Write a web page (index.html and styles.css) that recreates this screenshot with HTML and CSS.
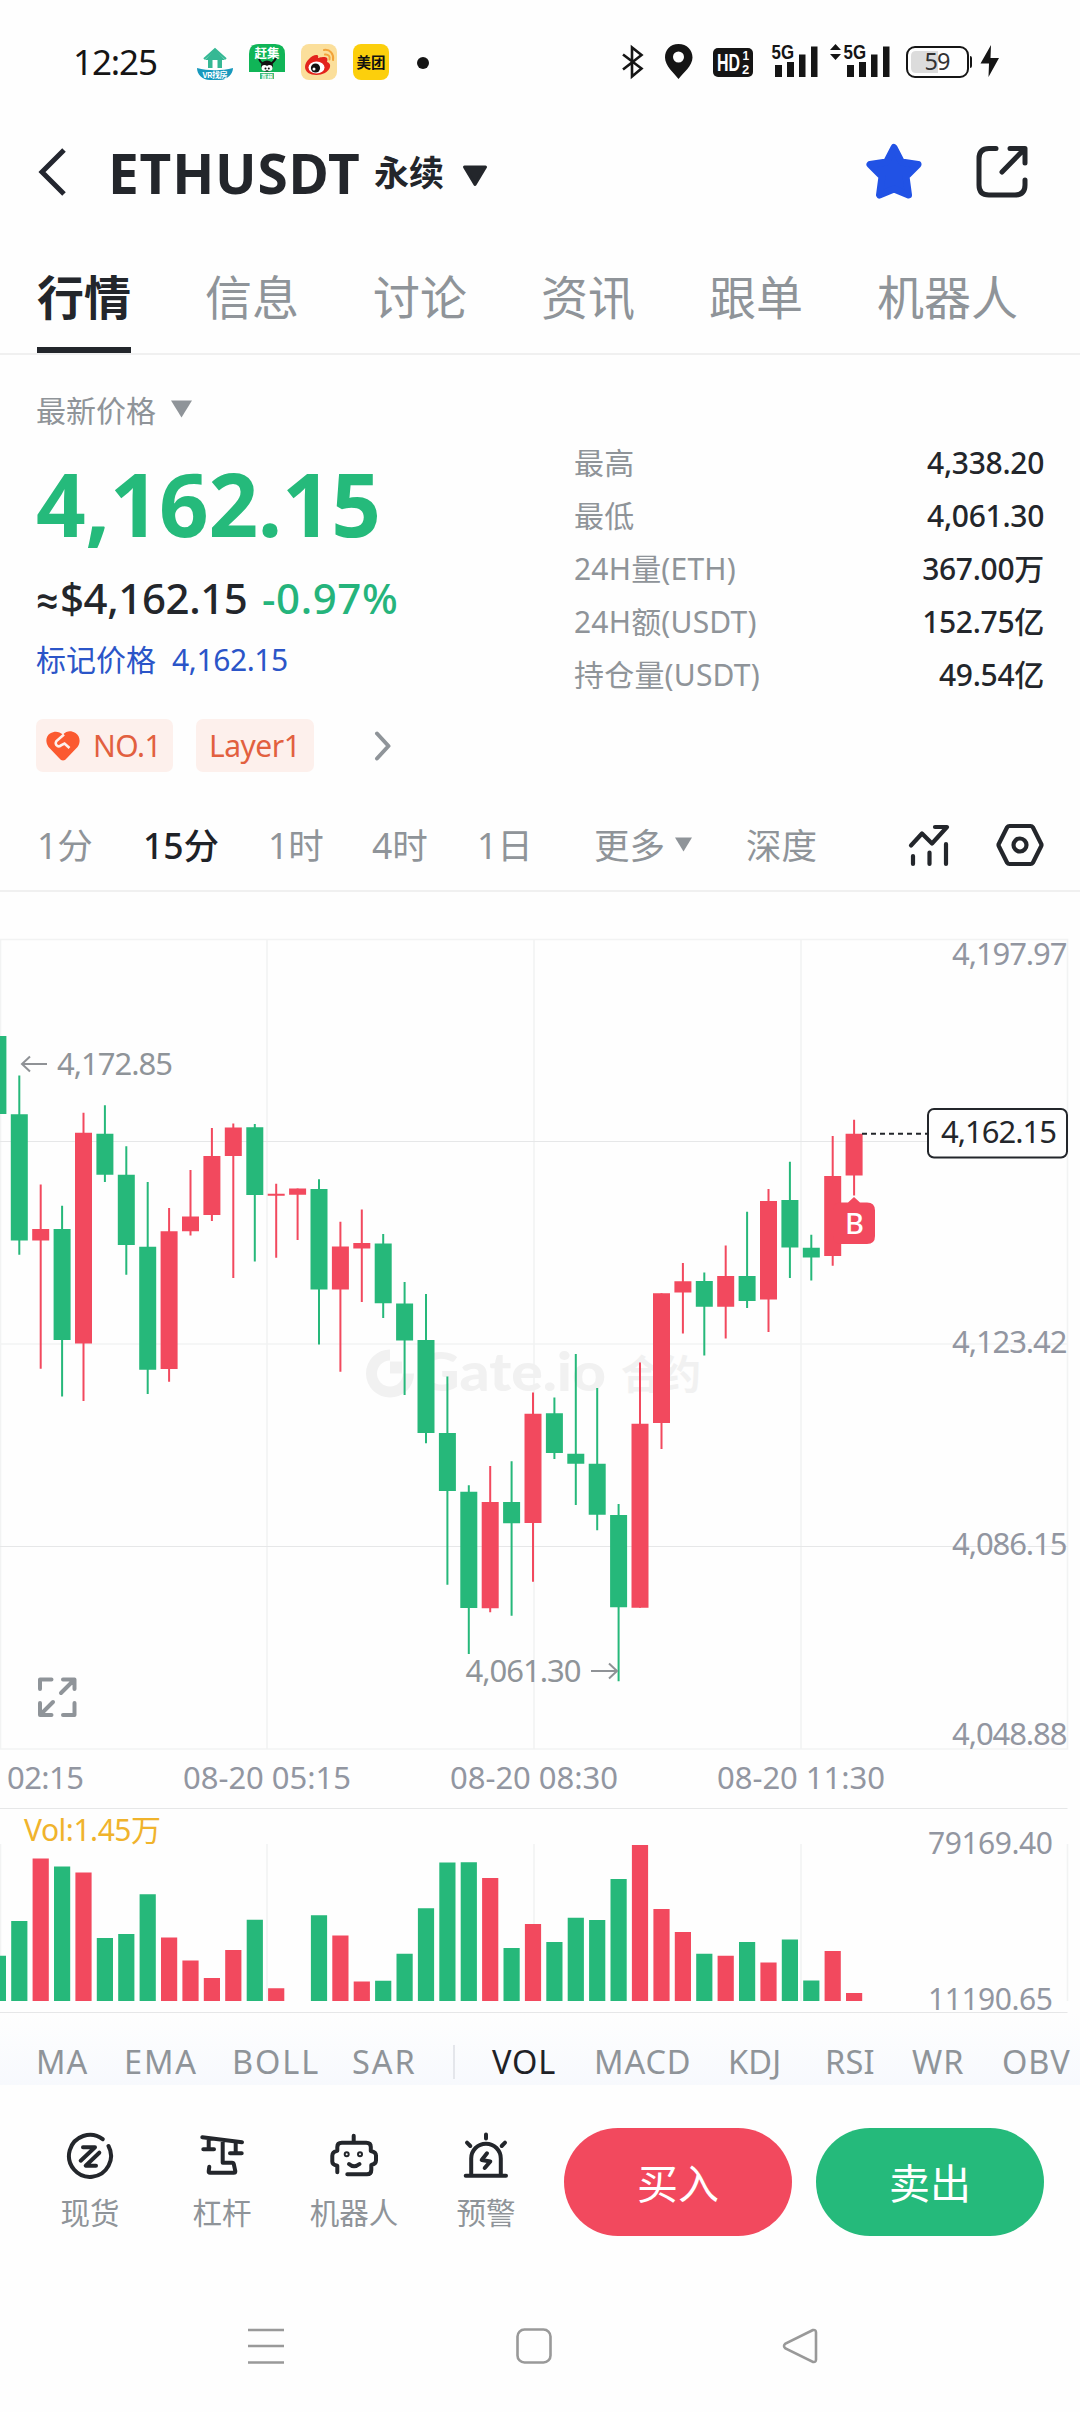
FILE: index.html
```html
<!DOCTYPE html>
<html lang="zh-CN">
<head>
<meta charset="utf-8">
<title>ETHUSDT 永续</title>
<link rel="stylesheet" href="styles.css">
</head>
<body>
<div class="screen">
  <div class="status">
    <span class="clock">12:25</span>
    <div class="apps">
      <svg class="app" viewBox="0 0 36 36"><path d="M8 16 18 5l10 11h-3v8H11v-8z" fill="#35b894"/><path d="M15.500 24v-8h5v8z" fill="#fff"/><path d="M7 15 18 5l11 10" fill="none" stroke="#35b894" stroke-width="2"/><path d="M0 24c11 3 25 3 36 0 0 6-6 12-13 12H13C5 36 0 30 0 24z" fill="#1899bd"/><text x="18" y="33.500" class="app-text" fill="#fff" font-size="8" textLength="25">VR找房</text></svg>
      <svg class="app" viewBox="0 0 36 36"><path d="M0 10Q0 0 10 0h16q10 0 10 10v18H0z" fill="#10b557"/><path d="M11 29h14v6H11z" fill="#3dbb79"/><text x="18" y="13.500" class="app-text" fill="#fff" font-size="12.500">赶集</text><path d="M10 15q2 5 8 6 6-1 9-7" fill="none" stroke="#111" stroke-width="2"/><ellipse cx="18" cy="22" rx="6" ry="5.500" fill="#111"/><circle cx="15.500" cy="24" r="3" fill="#fff"/><circle cx="20.500" cy="24" r="3" fill="#fff"/><circle cx="16.500" cy="24.500" r="1" fill="#111"/><circle cx="19.800" cy="24.500" r="1" fill="#111"/><text x="18" y="34.500" class="app-text" fill="#fff" font-size="6">直租</text></svg>
      <svg class="app" viewBox="0 0 36 36"><rect width="36" height="36" rx="8" fill="#fbdf9b"/><path d="M4 23c0-6 8-13 12-12 2 .5 1 3 1 3s7-2.500 9 0c1 1.500 0 4 0 4s4 1 3 5c-1 5-8 8-13.500 8C9 31 4 28 4 23z" fill="#e3231c"/><ellipse cx="15.500" cy="23.500" rx="8" ry="6" fill="#fff"/><circle cx="14.500" cy="24" r="4.600" fill="#111"/><circle cx="13" cy="25" r="1.500" fill="#fff"/><path d="M23 6c6-1 10 4 9 10M24 10.500c3-.5 5.500 2 4.500 5" fill="none" stroke="#f2a33a" stroke-width="2" stroke-linecap="round"/></svg>
      <svg class="app" viewBox="0 0 36 36"><rect width="36" height="36" rx="8" fill="#fccf0c"/><text x="18" y="23.500" class="app-text" fill="#111" font-size="14.500">美团</text></svg>
    </div>
    <span class="dot"></span>
    <svg class="sys" viewBox="0 0 380 36"><g fill="none" stroke="#151515" stroke-width="2.600"><path d="m3 10.500 18.500 14L12 32.500v-29l9.500 7.500L3 25.500" /></g>
      <path d="M58.500 0C50 0 45 6 45 13.500 45 22 54 29 58.500 35 63 29 72.500 22 72.500 13.500 72.500 6 67 0 58.500 0zm0 7.500a5.500 5.500 0 1 1 0 11 5.500 5.500 0 0 1 0-11z" fill="#151515"/>
      <rect x="93" y="4" width="40" height="29" rx="5" fill="#151515"/><text x="97" y="27" fill="#fff" class="hd" font-size="24" textLength="23" lengthAdjust="spacingAndGlyphs">HD</text><text x="122.500" y="16" fill="#fff" class="hd" font-size="12">1</text><text x="122" y="29.500" fill="#fff" class="hd" font-size="13">2</text>
      <g fill="#151515"><text x="151.500" y="15" class="net" font-size="20" textLength="22.500" lengthAdjust="spacingAndGlyphs">5G</text><path d="M155 21h7v12h-7zM167 18h7v15h-7zM179 10.500h6.500V33H179zM191 2.500h6.500V33H191z"/>
      <path d="m215.500 0 5.500 6h-11zM210 10h11l-5.500 6z"/><text x="223.500" y="15" class="net" font-size="20" textLength="22.500" lengthAdjust="spacingAndGlyphs">5G</text><path d="M227 21h7v12h-7zM239 18h7v15h-7zM251 10.500h6.500V33H251zM263 2.500h6.500V33H263z"/></g>
      <rect x="287" y="3" width="61" height="30" rx="8" fill="none" stroke="#151515" stroke-width="2"/><path d="M296 7h22v22h-22q-5 0-5-5V12q0-5 5-5z" fill="#dcdcdc"/><path d="M350 12q2 0 2 2v8q0 2-2 2z" fill="#151515"/><text x="317.500" y="26" class="batt" font-size="23.500" textLength="26">59</text>
      <path d="m371 1-10.500 18.500h8.500L368.500 33 379 14h-8.500z" fill="#151515"/></svg>
  </div>

  <header class="head">
    <svg class="back" viewBox="0 0 30 48"><path d="M26 2 4 24l22 22" /></svg>
    <h1>ETHUSDT</h1><span class="kind">永续</span>
    <svg class="tri-lg" viewBox="0 0 26 22"><path d="M2.500 2h21L13 19.500z"/></svg>
    <svg class="star" viewBox="0 0 58 58"><path d="m29 4.500 7.500 14.500 16.500 2.500-12 12 2.500 18.500L29 46l-14.500 6L17 33.500 5 21.500 21.500 19z"/></svg>
    <svg class="share" viewBox="0 0 52 54"><path d="M20 3.500h-7q-10 0-10 10V40q0 10 10 10h26q10 0 10-10v-5M34 3.500h15V18M47.500 5 26 27"/></svg>
  </header>

  <nav class="tabs">
    <a class="on">行情</a><a>信息</a><a>讨论</a><a>资讯</a><a>跟单</a><a>机器人</a>
  </nav>

  <section class="quote">
    <div class="quote-left">
      <div class="last-label">最新价格<svg class="tri-md" viewBox="0 0 20 17"><path d="M0 .5h20L10 16.500z"/></svg></div>
      <div class="last">4,162.15</div>
      <div class="conv"><span><i>≈</i>$4,162.15</span><em>-0.97%</em></div>
      <div class="mark"><span>标记价格</span><b>4,162.15</b></div>
      <div class="tags">
        <span class="tag"><svg class="heart" viewBox="0 0 34 30"><path d="M17 29.500q-2 0-4-2.500L2.500 16C-1 11 0 5 4 2.500 9-.5 13 .5 17 3.500 21-.5 25-.5 29.500 2 34 5 35 11 31.500 16L21 27q-2 2.500-4 2.500z"/><path d="m18 3.500-7.500 6.500q-2 3 1 5 2 1 4-1l3-1.500 5 4.500" fill="none" stroke="#fdf0ec" stroke-width="2.600"/></svg>NO.1</span>
        <span class="tag plain">Layer1</span>
        <svg class="more" viewBox="0 0 18 30"><path d="M3 2.500 14.500 15 3 27.500"/></svg>
      </div>
    </div>
    <dl class="stats">
      <div><dt>最高</dt><dd>4,338.20</dd></div>
      <div><dt>最低</dt><dd>4,061.30</dd></div>
      <div><dt>24H量(ETH)</dt><dd>367.00万</dd></div>
      <div><dt>24H额(USDT)</dt><dd>152.75亿</dd></div>
      <div><dt>持仓量(USDT)</dt><dd>49.54亿</dd></div>
    </dl>
  </section>

  <nav class="frames">
    <a class="f1">1分</a><a class="f2 on">15分</a><a class="f3">1时</a><a class="f4">4时</a><a class="f5">1日</a>
    <a class="f6">更多<svg class="tri-sm" viewBox="0 0 16 14"><path d="M0 .5h16L8 13.500z"/></svg></a><a class="f7">深度</a>
    <svg class="tool trend" viewBox="0 0 42 44"><path d="M3 22.500 14 10.500l10 10L39 4H27M5 33v8M21.500 29.500V41M38 21v20"/></svg>
    <svg class="tool hex" viewBox="0 0 48 44"><path d="M13.500 3h21q1.500 0 2.500 1.500L45 20.500q1 1.500 0 3l-8 16q-1 1.500-2.500 1.500h-21q-1.500 0-2.500-1.500l-8-16q-1-1.500 0-3l8-16Q12 3 13.500 3z"/><circle cx="24" cy="22" r="6.500"/></svg>
  </nav>

  <svg class="chart" viewBox="0 0 1080 916">
    <g transform="translate(0 8)">
    <path class="grid" d="M0 39.500H1067.500V849H.5V39.500M0 444H1067M267 39.500V849M534 39.500V849M801 39.500V849"/>
    <path class="grid dark" d="M0 241.500H1067.500M0 646.500H1067.500"/>
    <g class="mark-bg"><path d="M390 449.500a24 24 0 1 0 24 24h-11a13 13 0 1 1-13-13zM390 461.500h12v12h-12z"/>
    <text x="417" y="491" textLength="189" lengthAdjust="spacingAndGlyphs">Gate.io</text><text x="621" y="489">合约</text></g>
    <path class="up wick" d="M40.700 284.500V468.700M83.500 212.800V501.100M169.100 307.900V481.800M190.500 270V335.400M211.900 228V321M233.300 223.500V378.100M276.200 283.800V357.800M297.600 288.600V339.900M340.400 321.700V471.800M361.800 309.600V401.900M490.200 566V712.300M533 492.500V681.700M640 462.500V707.700M661.500 393.300V549M682.900 363V433.600M725.700 345.400V438.400M768.500 288.900V431.900M832.700 235.900V365.700M854.100 219.700V295.500"/>
    <path class="down wick" d="M19.300 175.600V354.700M62.100 305.800V496.600M104.900 205.300V282.100M126.300 246.200V374.700M147.700 282.100V493.900M254.800 223.900V361.600M319 279.300V444.600M383.200 334.100V418.100M404.600 381.900V494.900M426 394V543.300M447.400 476.600V684.700M468.800 585.300V754M511.600 561.300V715.700M554.400 497.600V559M575.800 453.900V605M597.200 488V630.300M618.600 604V781.300M704.300 372.600V455.600M747.100 311.700V408.100M789.900 261.700V378.100M811.300 334.700V380.500"/>
    <path class="up body" d="M40.700 328.900V340.600M83.500 232.800V443.600M169.100 331.300V469.100M190.500 316.500V331.300M211.900 255.900V315.100M233.300 227.600V255.900M276.200 293.700V295.700M297.600 288.600V294.800M340.400 346.500V389.500M361.800 343V348.500M490.200 602V708.300M533 513.700V623M640 523.700V707.700M661.500 393.300V523M682.900 381.200V392.600M725.700 376.100V406.700M768.500 301V399.500M832.700 275.900V356.100M854.100 233.800V275.500"/>
    <path class="down body" d="M-2.100 136V213.900M19.300 214.200V340.600M62.100 328.900V440.100M104.900 233.800V274.800M126.300 274.800V345.100M147.700 346.800V469.700M254.800 227.300V295.100M319 288.900V389.500M383.200 343.400V403.300M404.600 403.600V440.500M426 440.100V533.100M447.400 533.100V591M468.800 591.700V708M511.600 602V623.300M554.400 513.300V553M575.800 553.700V563.700M597.200 563.700V614.700M618.600 615V707.300M704.300 380.900V406.700M747.100 376.100V400.900M789.900 300V347.500M811.300 347.800V357.500"/>
    <g class="note"><path d="M47 164H22M30 156.500 22 164l8 7.500M591 771h26M609 763.500l8 7.500-8 7.500"/><text x="57" y="175" textLength="116">4,172.85</text><text x="465.500" y="782" textLength="116">4,061.30</text></g>
    <g class="axis"><text x="952" y="65" textLength="115.500">4,197.97</text><text x="952" y="453" textLength="115.500">4,123.42</text><text x="952" y="655" textLength="115.500">4,086.15</text><text x="952" y="845" textLength="115.500">4,048.88</text>
    <text x="7" y="888.500" textLength="77">02:15</text><text x="183" y="888.500" textLength="168">08-20 05:15</text><text x="450" y="888.500" textLength="168">08-20 08:30</text><text x="717" y="888.500" textLength="168">08-20 11:30</text></g>
    <path class="dash" d="M862 233.800H928"/>
    <rect x="928" y="209" width="139" height="48.500" rx="6" class="pill"/><text x="941" y="243" textLength="116" class="pill-text">4,162.15</text>
    <path d="M848 302.500 854 297l6 5.500h7q8 0 8 8V336q0 8-8 8h-26q-8 0-8-8v-25.500q0-8 8-8z" fill="#f2495e"/><text x="854.500" y="334" class="buy-mark" text-anchor="middle">B</text>
    <path class="expand" transform="translate(0 -10)" d="M40 799v-9.500h11.500M63 789.500h11.500V799M74 790 61 803M74.500 813v12H63M51.500 825H40v-12M40.500 824.500 53 812"/>
    </g>
  </svg>

  <svg class="volume" viewBox="0 0 1080 205">
    <path class="grid dark" d="M0 .5H1067.500M0 204.500H1067.500"/>
    <path class="grid" d="M.5 36V193M267 36V193M534 36V193M801 36V193M1067.500 36V193"/>
    <path class="up vbar" d="M40.700 50.600V193M83.500 64.500V193M169.100 129.600V193M190.500 152.600V193M211.900 170V193M233.300 141.900V193M276.200 180.300V193M340.400 127.600V193M361.800 173.600V193M490.200 70.100V193M533 116.100V193M640 37.100V193M661.500 101V193M682.900 124V193M725.700 147.800V193M768.500 154.500V193M832.700 143V193M854.100 185.100V193"/>
    <path class="down vbar" d="M-2.100 147.800V193M19.300 112.900V193M62.100 58.600V193M104.900 130V193M126.300 126V193M147.700 86.300V193M254.800 111.700V193M319 107.300V193M383.200 172.800V193M404.600 145.800V193M426 100.200V193M447.400 54.600V193M468.800 54.200V193M511.600 139.900V193M554.400 133.900V193M575.800 109.700V193M597.200 112.100V193M618.600 70.900V193M704.300 145.800V193M747.100 133.900V193M789.900 131.500V193M811.300 172.400V193"/>
    <text x="24" y="33" class="vol-label" textLength="137">Vol:1.45万</text>
    <g class="axis"><text x="928" y="46" textLength="125">79169.40</text><text x="928" y="202" textLength="125">11190.65</text></g>
  </svg>

  <nav class="indicators">
    <a class="i1">MA</a><a class="i2">EMA</a><a class="i3">BOLL</a><a class="i4">SAR</a><i class="sep"></i><a class="i5 on">VOL</a><a class="i6">MACD</a><a class="i7">KDJ</a><a class="i8">RSI</a><a class="i9">WR</a><a class="i10">OBV</a>
  </nav>

  <footer class="actions">
    <a class="act"><svg viewBox="0 0 48 48"><path d="M36.700 7.200A21 21 0 1 0 42.500 14"/><path d="M17 15.300H29L14.700 28.700M33.300 20.700 19.700 33.700H30"/></svg>现货</a>
    <a class="act"><svg viewBox="0 0 48 48"><path d="M4.300 5.300 44 10.300M10.700 6.700V17.300M5.300 17.300H16M37.700 10.300V21.300M32 21.300H43.700M24.700 8V30.700H34q1.500 0 1.800 1.500l1.500 7q0 1.500-1.500 1.500H12q-1.500 0-1.300-1.500l.6-4.500"/></svg>杠杆</a>
    <a class="act"><svg viewBox="0 0 48 48"><path d="M23.700 3.700v7M7.300 40.300v-6.600q-5-1-5-4v-6q0-4 5-5V15q0-4.300 4.500-4.300h24.500q4.500 0 4.500 4.300v4q5.200 1 5.200 4.500v5q0 3.500-4.700 4.500V38q0 4.300-4.300 4.300H17.300M19 32q5 4.500 10.500 0"/><circle cx="16.700" cy="22.300" r="1"/><circle cx="30" cy="22.300" r="1"/></svg>机器人</a>
    <a class="act"><svg viewBox="0 0 48 48"><path d="M3.700 43.700H44M9.200 43V26.500a14.800 14.800 0 0 1 29.600 0V43M24 2.500v4M5 10.700 8.300 14M43 10.700 39.700 14M25 21.300 19.700 28l8.600 1.500-5.600 6.500"/></svg>预警</a>
    <button class="buy">买入</button><button class="sell">卖出</button>
  </footer>

  <div class="sysnav">
    <svg viewBox="0 0 36 36"><path d="M0 2h36M0 18h36M0 34.500h36"/></svg>
    <svg viewBox="0 0 36 36"><rect x="1.500" y="1.500" width="33" height="33" rx="7"/></svg>
    <svg viewBox="0 0 36 36"><path d="M31 2 3.500 15.500q-3 2.500 0 5L31 34q3 .5 3-2.500v-27Q34 1.500 31 2z"/></svg>
  </div>
</div>
</body>
</html>
```
FILE: styles.css
```css
* { box-sizing: border-box; }
body { margin: 0; background: #fefefe; }
.screen {
  width: 1080px; height: 2412px; overflow: hidden;
  display: flex; flex-direction: column;
  background: #fefefe; color: #23262b;
  font-family: "Noto Sans", "Noto Sans CJK SC", sans-serif;
}
.screen > * { flex: none; }
svg { display: block; flex: none; }

/* status bar */
.status { height: 124px; display: flex; align-items: center; padding-left: 73px; }
.clock { width: 124px; font-size: 35px; letter-spacing: -1.100px; line-height: 48px; color: #151515; }
.apps { display: flex; gap: 16px; }
.app { width: 36px; height: 36px; }
.app-text { font-family: "Noto Sans CJK SC", sans-serif; font-weight: 700; text-anchor: middle; }
.dot { width: 12px; height: 12px; border-radius: 50%; background: #151515; margin: 2px 0 0 28px; }
.sys { width: 380px; height: 36px; margin-left: 191px; overflow: visible; }
.hd, .net { font-family: "Liberation Sans", sans-serif; font-weight: 700; }
.batt { fill: #333; text-anchor: middle; }

/* title */
.head { height: 108px; display: flex; align-items: center; padding: 0 0 12px 38px; }
.back { width: 30px; height: 48px; fill: none; stroke: #23262f; stroke-width: 5; }
h1 { margin: 0 0 0 40px; width: 266px; font-size: 55px; font-weight: 700; line-height: 62px; padding-top: 2px; letter-spacing: .8px; }
.kind { width: 87px; font-size: 35px; font-weight: 600; line-height: 50px; padding-top: 2px; }
.tri-lg { width: 26px; height: 22px; margin: 8px 0 0 1px; fill: #23262b; stroke: #23262b; stroke-width: 3; stroke-linejoin: round; }
.star { width: 58px; height: 58px; margin-left: 377px; fill: #2152e5; stroke: #2152e5; stroke-width: 7; stroke-linejoin: round; }
.share { width: 52px; height: 54px; margin-left: 53px; fill: none; stroke: #23262b; stroke-width: 5; stroke-linecap: round; stroke-linejoin: round; }

/* tabs */
.tabs { height: 123px; display: flex; gap: 74px; padding: 37px 0 0 37px; border-bottom: 2px solid #f0f0f0; margin-bottom: -1px; }
.tabs a { height: 84px; font-size: 47px; line-height: 56px; color: #8f9499; }
.tabs .on { color: #23262b; font-weight: 600; border-bottom: 6px solid #23262b; }

/* quote */
.quote { height: 444px; display: flex; justify-content: space-between; padding: 33px 36px 0 36px; }
.last-label { display: flex; align-items: center; height: 44px; font-size: 30px; color: #8f9499; }
.tri-md { width: 21px; height: 18px; margin-left: 15px; fill: #8f9499; }
.last { height: 100px; margin-top: 24px; font-size: 87px; line-height: 97px; font-weight: 700; letter-spacing: -.4px; color: #25ba7b; }
.conv { display: flex; height: 56px; margin-top: 15px; font-size: 42px; line-height: 56px; font-weight: 500; }
.conv span { width: 226px; letter-spacing: -.4px; white-space: nowrap; }
.conv i { display: inline-block; width: 24px; font: 500 40px/1 Roboto, sans-serif; letter-spacing: 0; }
.conv em { font-style: normal; color: #25b47c; letter-spacing: .6px; }
.mark { display: flex; gap: 16px; height: 40px; margin-top: 14px; font-size: 30px; line-height: 40px; color: #2b55c8; }
.mark b { font-weight: 400; letter-spacing: -.4px; }
.tags { display: flex; align-items: center; margin-top: 39px; }
.tag { display: flex; align-items: center; width: 137px; height: 53px; padding-left: 10px; border-radius: 7px; background: #fdf0ec; color: #e2603f; font-size: 30px; line-height: 53px; margin-right: 23px; letter-spacing: -.5px; }
.tag.plain { width: 118px; padding-left: 13px; margin-right: 60px; }
.heart { width: 34px; height: 30px; margin-right: 13px; fill: #fb5a30; }
.more { width: 18px; height: 30px; fill: none; stroke: #8f9499; stroke-width: 4; stroke-linecap: round; stroke-linejoin: round; }
.stats { width: 470px; margin: 50px 0 0; font-size: 30px; }
.stats div { display: flex; justify-content: space-between; height: 52.900px; line-height: 52.900px; }
.stats dt { color: #8f9499; letter-spacing: .2px; }
.stats dd { margin: 0; font-weight: 500; letter-spacing: -.3px; }

/* time frames */
.frames { height: 94px; display: flex; align-items: center; padding: 1px 0 0 37px; border-bottom: 2px solid #f0f0f0; font-size: 35.500px; line-height: 50px; color: #8f9499; }
.frames .on { color: #1f2227; font-weight: 500; }
.f1 { width: 106px; } .f2 { width: 125px; } .f3 { width: 104px; } .f4 { width: 105px; } .f5 { width: 117px; }
.f6 { width: 152px; display: flex; align-items: center; } .f7 { width: 162px; }
.tri-sm { width: 17px; height: 15px; margin-left: 10px; fill: #8f9499; }
.tool { fill: none; stroke: #23262b; stroke-width: 4.200; stroke-linecap: round; stroke-linejoin: round; }
.trend { width: 42px; height: 44px; }
.hex { width: 48px; height: 44px; margin-left: 46px; }

/* price chart */
.chart { width: 1080px; height: 916px; }
.chart text, .volume text { font-size: 31px; }
.grid { fill: none; stroke: #f2f3f3; stroke-width: 1.600; }
.grid.dark { stroke: #e6e7e8; stroke-width: 1; }
.up { stroke: #f2495e; } .down { stroke: #26b87a; }
.wick { stroke-width: 2; }
.body { stroke-width: 17; }
.vbar { stroke-width: 16.200; }
.mark-bg { fill: #f1f1f1; }
.chart .mark-bg text { font-family: Lato, "Noto Sans CJK SC", sans-serif; }
.chart .mark-bg text:first-of-type { font-size: 54px; font-weight: 900; }
.chart .mark-bg text:last-of-type { font-size: 40px; font-weight: 700; }
.note { fill: #8f9499; }
.note path { fill: none; stroke: #8f9296; stroke-width: 2; }
.axis { fill: #9296a1; }
.dash { stroke: #23262b; stroke-width: 2; stroke-dasharray: 5 4; }
.pill { fill: #fefefe; stroke: #23262b; stroke-width: 2; }
.pill-text { fill: #23262b; }
.chart .buy-mark { fill: #fff; font-size: 29px; font-weight: 500; }
.expand { fill: none; stroke: #8f9499; stroke-width: 4; stroke-linecap: round; stroke-linejoin: round; }
.volume { width: 1080px; height: 205px; }
.volume .vol-label { fill: #f0b32c; font-size: 30px; }
.volume .axis text { font-size: 30px; }

/* indicators */
.indicators { height: 72px; display: flex; align-items: center; padding: 26px 0 0 36px; background: linear-gradient(#fefefe, #f7f9fd); font-size: 32.500px; line-height: 44px; color: #8f9499; }
.indicators a { flex: none; letter-spacing: .9px; }
.indicators .on { color: #1f2227; }
.i1 { width: 88px; } .i2 { width: 108px; } .i3 { width: 120px; letter-spacing: 1.600px; } .i4 { width: 101px; }
.indicators .i2, .indicators .i3, .indicators .i4 { letter-spacing: 1.900px; }
.sep { flex: none; width: 2px; height: 34px; margin-right: 37px; background: #e4e6eb; }
.i5 { width: 102px; } .i6 { width: 134px; } .i7 { width: 97px; } .i8 { width: 87px; } .i9 { width: 90px; }
.indicators .i7, .indicators .i8 { letter-spacing: .2px; }

/* bottom actions */
.actions { height: 196px; display: flex; padding: 43px 0 0 24px; }
.act { width: 132px; display: flex; flex-direction: column; align-items: center; padding-top: 4px; font-size: 29.500px; line-height: 44px; color: #8f9499; }
.act svg { width: 48px; height: 48px; margin-bottom: 11px; fill: none; stroke: #23262b; stroke-width: 4; stroke-linecap: round; stroke-linejoin: round; }
.actions button { width: 228px; height: 108px; border: 0; border-radius: 54px; font: 400 41px/106px "Noto Sans CJK SC", sans-serif; color: #fff; padding: 0 0 2px; }
.buy { background: #f2495e; margin-left: 12px; }
.sell { background: #25ba7b; margin-left: 24px; }

/* system navigation */
.sysnav { display: flex; gap: 231px; padding: 47px 0 0 248px; }
.sysnav svg { width: 36px; height: 36px; fill: none; stroke: #999; stroke-width: 2.600; }
.sysnav svg:nth-child(2) { margin: 0 -1px 0 1px; }
```
